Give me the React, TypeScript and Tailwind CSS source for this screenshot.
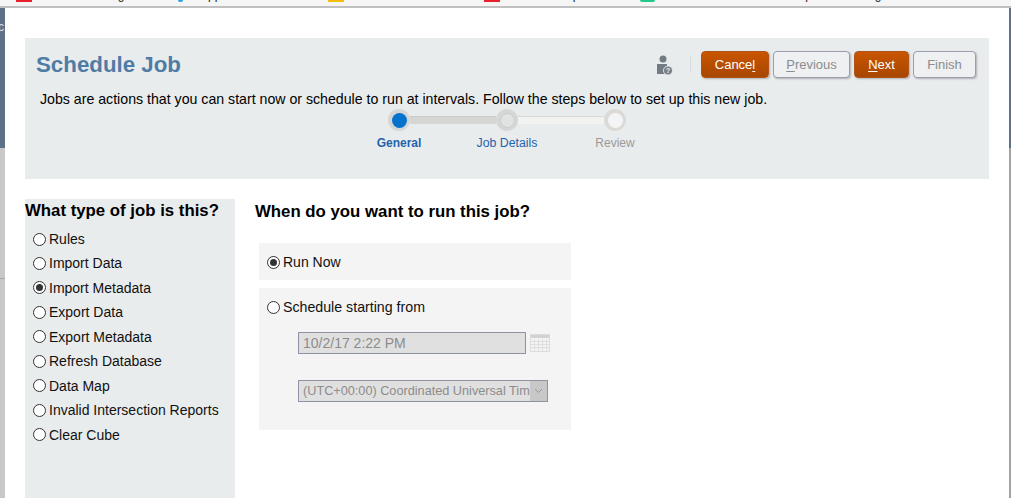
const SANS = "font-['Liberation_Sans',Arial,sans-serif]";

function Radio({ checked = false }: { checked?: boolean }) {
  return (
    <span className="flex h-[13px] w-[13px] shrink-0 items-center justify-center rounded-full border border-[#333333] bg-white">
      {checked && <span className="h-[7px] w-[7px] rounded-full bg-[#333333]" />}
    </span>
  );
}

function Btn({ u, rest, before = "", primary = false, w }: { u: string; rest: string; before?: string; primary?: boolean; w: string }) {
  return (
    <div
      className={
        `flex h-[27px] items-center justify-center rounded-[4px] border text-[13px] shadow-[1px_1px_2px_rgba(0,0,0,0.25)] ${w} ` +
        (primary
          ? "border-[#b0541a] bg-gradient-to-b from-[#c95500] to-[#a84700] text-white"
          : "border-[#9a9eaf] bg-[#eef0f1] text-[#8a8d90]")
      }
    >
      {before}
      <span className="underline underline-offset-2">{u}</span>
      {rest}
    </div>
  );
}

const jobs = ["Rules", "Import Data", "Import Metadata", "Export Data", "Export Metadata", "Refresh Database", "Data Map", "Invalid Intersection Reports", "Clear Cube"];

function Calendar() {
  return (
    <svg width="20" height="18" viewBox="0 0 20 18" className="ml-1 shrink-0">
      <rect x="0.5" y="0.5" width="19" height="17" fill="#f4f4f4" stroke="#dcdcdc" />
      <rect x="1" y="1" width="18" height="3" fill="#d2d2d2" />
      <path d="M1 7.5H19M1 10.5H19M1 13.5H19M4.5 5V17M8.5 5V17M12.5 5V17M16.5 5V17" stroke="#dedede" strokeWidth="1" fill="none" />
    </svg>
  );
}

function Bookmark({ icon, text, w, ml }: { icon: string; text: string; w: string; ml: string }) {
  return (
    <div className={`flex shrink-0 items-start ${w}`}>
      <span className={`h-[2px] shrink-0 ${icon}`} />
      <span className={`-mt-[12px] whitespace-nowrap text-[12px] leading-[14px] text-[#222222] ${ml}`}>{text}</span>
    </div>
  );
}

export default function App() {
  return (
    <div className={`${SANS} flex h-[498px] w-[1011px] flex-col overflow-hidden bg-white text-black`}>
      <div className="flex h-[6px] shrink-0 overflow-hidden bg-[#f5f5f5] pl-[16px]">
        <Bookmark icon="w-[16px] bg-[#e8212b]" text="Data Management" ml="ml-[27px]" w="w-[162px]" />
        <Bookmark icon="w-[5px] rounded-b-[2px] bg-[#29a3e0]" text="Apps" ml="ml-[17px]" w="w-[150px]" />
        <Bookmark icon="w-[16px] bg-[#f5bd11]" text="Oracle Cloud" ml="ml-[6px]" w="w-[156px]" />
        <Bookmark icon="w-[16px] bg-[#e8212b]" text="Oracle Help" ml="ml-[16px]" w="w-[156px]" />
        <Bookmark icon="w-[15px] rounded-b-[4px] bg-[#22c98a]" text="Oracle Enterprise Planning" ml="ml-[83px]" w="w-[300px]" />
      </div>
      <div className="h-[2px] shrink-0 bg-[#c0c0c0]" />
      <div className="flex min-h-0 flex-1">
        <div className="flex w-[5px] shrink-0 flex-col overflow-hidden">
          <div className="h-[140px] overflow-hidden bg-[#5f7186] pt-[12px] text-[12px] leading-[14px] text-[#d8dde2]">
            <span className="-ml-[2px] block">c</span>
          </div>
          <div className="h-[130px] bg-[#c8c8c8]" />
          <div className="h-px bg-[#a8a8a8]" />
          <div className="flex-1 bg-[#c8c8c8]" />
        </div>
        <div className="flex min-w-0 flex-1 flex-col pl-[20px] pr-[20px] pt-[30px]">
          <div className="h-[141px] shrink-0 bg-[#e9eced] pl-[11px] pr-[13px] pt-[13px]">
            <div className="flex h-[27px] items-center">
              <div className="flex-1 text-[22.3px] font-bold leading-[27px] text-[#4f7ca5]">Schedule Job</div>
              <svg width="17" height="20" viewBox="0 0 17 20" className="shrink-0">
                <circle cx="7" cy="4" r="3.5" fill="#737c84" />
                <path d="M1 9h10v10H1z" fill="#737c84" />
                <circle cx="12" cy="15.5" r="4.5" fill="#737c84" stroke="#e9eced" strokeWidth="1" />
                <text x="12" y="18.2" textAnchor="middle" fontSize="7.5" fontWeight="700" fill="#f2f4f5">?</text>
              </svg>
              <div className="ml-[17px] mr-[10px] h-[17px] w-px bg-[#d8dcdf]" />
              <div className="flex gap-1">
                <Btn primary before="Cance" u="l" rest="" w="w-[68px]" />
                <Btn u="P" rest="revious" w="w-[77px]" />
                <Btn primary u="N" rest="ext" w="w-[55px]" />
                <div className="flex h-[27px] w-[63px] items-center justify-center rounded-[4px] border border-[#9a9eaf] bg-[#eef0f1] text-[13px] text-[#8a8d90] shadow-[1px_1px_2px_rgba(0,0,0,0.25)]">Finish</div>
              </div>
            </div>
            <p className="mt-[13px] pl-[4px] text-[14.17px] leading-[16px] text-black">
              Jobs are actions that you can start now or schedule to run at intervals. Follow the steps below to set up this new job.
            </p>
            <div className="-ml-[11px] -mr-[13px] mt-[2px] flex flex-col items-center">
              <div className="flex items-center">
                <span className="flex h-[22px] w-[22px] items-center justify-center rounded-full bg-[#d6d6d4]">
                  <span className="h-[15px] w-[15px] rounded-full bg-[#0572ce]" />
                </span>
                <span className="h-[8px] w-[86px] border-t border-[#c9c9c7] bg-[#d6d6d4]" />
                <span className="flex h-[22px] w-[22px] items-center justify-center rounded-full bg-[#d6d6d4]">
                  <span className="h-[15px] w-[15px] rounded-full border border-[#c3ccd4] bg-[#e2e2e0]" />
                </span>
                <span className="h-[8px] w-[86px] border-t border-[#d8d8d6] bg-[#f2f2f0]" />
                <span className="flex h-[22px] w-[22px] items-center justify-center rounded-full bg-[#dcdad6]">
                  <span className="h-[15px] w-[15px] rounded-full bg-[#f3f4f6]" />
                </span>
              </div>
              <div className="mt-[5px] grid w-[324px] grid-cols-3 text-center text-[12px] leading-[14px]">
                <span className="font-bold text-[#1f64ae]">General</span>
                <span className="text-[12.3px] text-[#1f64ae]">Job Details</span>
                <span className="text-[#9a9a9a]">Review</span>
              </div>
            </div>
          </div>
          <div className="mt-[20px] flex min-h-0 flex-1">
            <div className="w-[210px] shrink-0 bg-[#e9eced]">
              <div className="pt-[3px] text-[16.8px] font-bold leading-[18px]">What type of job is this?</div>
              <div className="mt-[11px] flex flex-col gap-[8.45px] pl-[8px]">
                {jobs.map((j, i) => (
                  <div key={j} className="flex h-[16px] items-center gap-[3px] text-[14px] leading-[16px] text-[#111111]">
                    <Radio checked={i === 2} />
                    <span>{j}</span>
                  </div>
                ))}
              </div>
            </div>
            <div className="pl-[20px]">
              <div className="pt-[4px] text-[16.8px] font-bold leading-[18px]">When do you want to run this job?</div>
              <div className="ml-[4px] mt-[22px] flex h-[37px] w-[312px] items-center gap-[3px] bg-[#f4f4f4] pl-[8px] pt-[1px] text-[14px] text-[#111111]">
                <Radio checked />
                <span>Run Now</span>
              </div>
              <div className="ml-[4px] mt-[8px] h-[142px] w-[312px] bg-[#f4f4f4] pl-[8px] pt-[11px] text-[14px] text-[#111111]">
                <div className="flex h-[16px] items-center gap-[3px]">
                  <Radio />
                  <span className="pt-[1px] text-[14.2px]">Schedule starting from</span>
                </div>
                <div className="ml-[31px] mt-[17px] flex items-center">
                  <div className="flex h-[22px] w-[228px] items-center border border-[#8d93a5] bg-[#e0e0e0] pl-[4px] text-[#8c8c8c]">10/2/17 2:22 PM</div>
                  <Calendar />
                </div>
                <div className="ml-[31px] mt-[26px] flex h-[22px] w-[250px] items-center border border-[#8d93a5] bg-[#e0e0e0] pl-[4px] text-[12.7px] text-[#8c8c8c]">
                  <span className="min-w-0 flex-1 overflow-hidden whitespace-nowrap pt-[2px]">(UTC+00:00) Coordinated Universal Time</span>
                  <span className="flex h-full w-[17px] shrink-0 items-center justify-center bg-[#c8c8c8]">
                    <svg width="9" height="6" viewBox="0 0 9 6"><path d="M1 1l3.5 3.5L8 1" stroke="#9a9a9a" strokeWidth="1" fill="none" /></svg>
                  </span>
                </div>
              </div>
            </div>
          </div>
        </div>
        <div className="flex w-[2px] shrink-0 flex-col">
          <div className="h-[140px] bg-[#5f7186]" />
          <div className="flex-1 bg-[#a3a3a3]" />
        </div>
      </div>
    </div>
  );
}
